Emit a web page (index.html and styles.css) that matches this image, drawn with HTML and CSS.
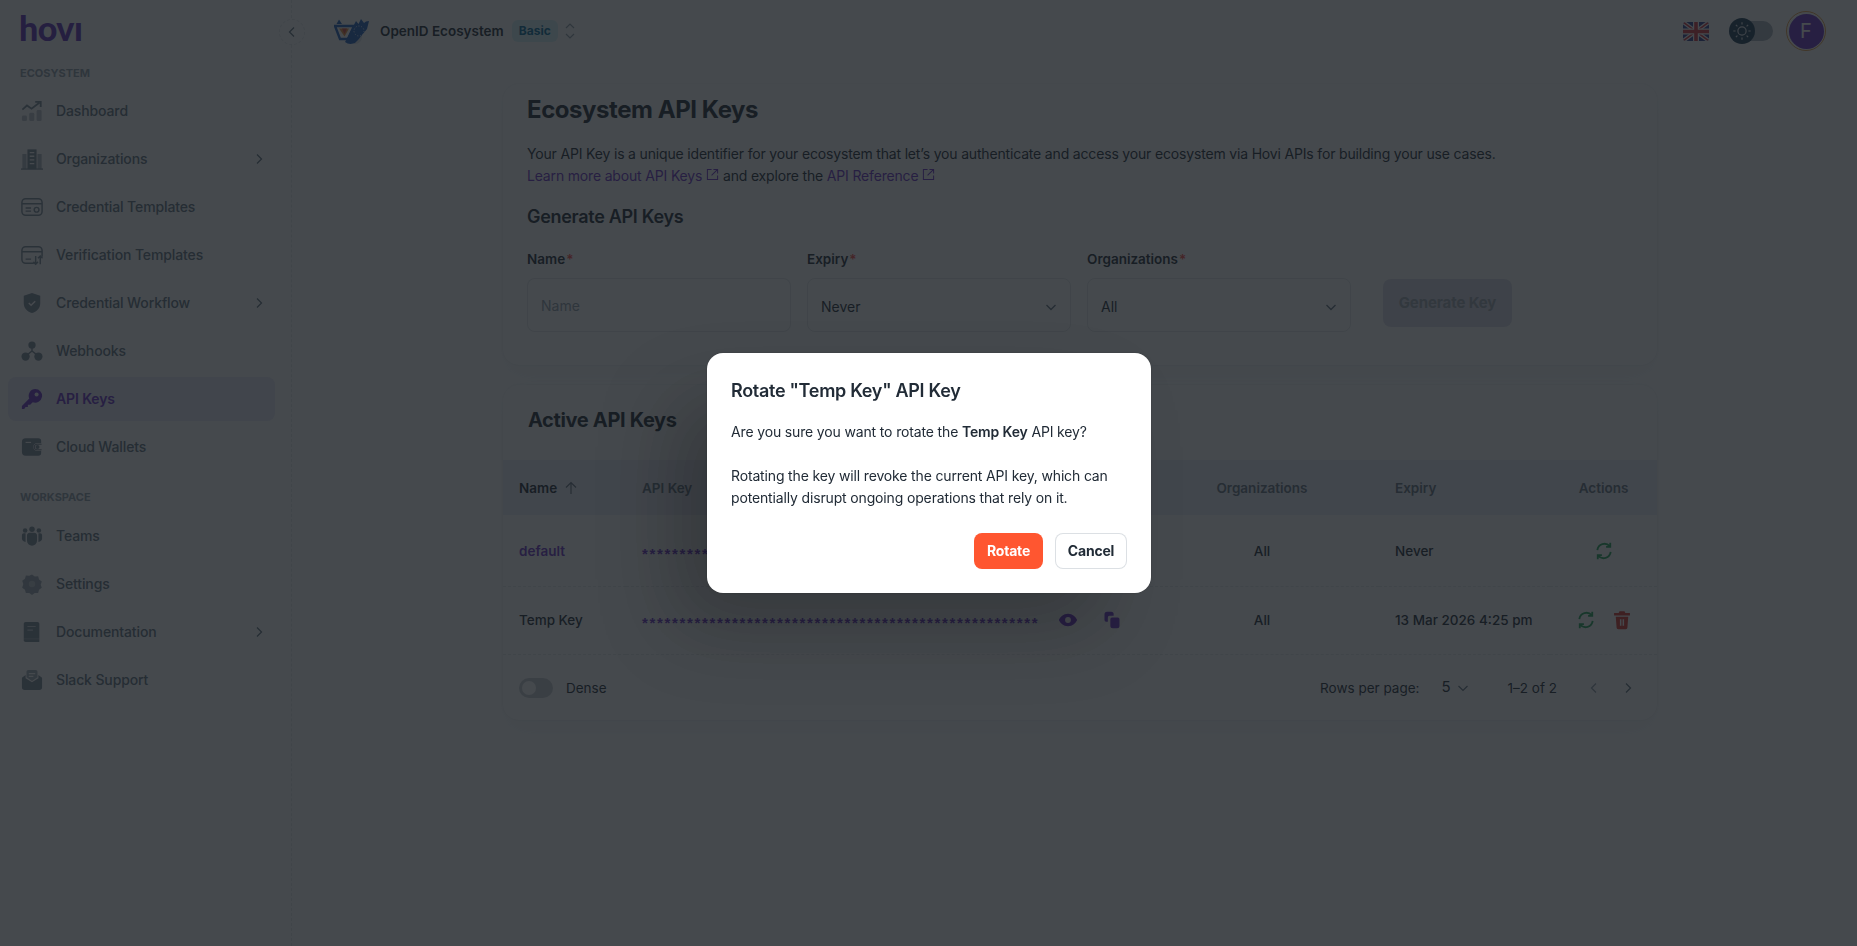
FILE: index.html
```html
<!DOCTYPE html>
<html lang="en">
<head>
<meta charset="utf-8">
<title>Ecosystem API Keys</title>
<link rel="stylesheet" href="styles.css">
</head>
<body>
<div class="app">
  <aside class="sidebar">
    <div class="logo">hovı</div>
    <div class="nav-section first">ECOSYSTEM</div>
    <nav class="nav">
      <a class="nav-item"><svg class="nav-icon" viewBox="0 0 24 24"><rect x="1" y="17" width="5.5" height="6" rx="1.5" opacity=".5"/><rect x="9" y="14" width="5.5" height="9" rx="1.5" opacity=".5"/><rect x="17" y="11" width="5.5" height="12" rx="1.5" opacity=".5"/><path d="M1.5 10.5l5-4.5 5 3.5L20 3M15.5 2H21.5V7.5" fill="none" stroke="currentColor" stroke-width="2"/></svg><span>Dashboard</span></a>
      <a class="nav-item"><svg class="nav-icon" viewBox="0 0 24 24"><path d="M7 1.5h10V23H7z" /><path d="M1.5 6.5H6V23H1.5zM18 6.5h4.5V23H18z" opacity=".6"/><path d="M9.5 5h5M9.5 9h5M9.5 13h5M9.5 17h5" stroke="#fff" stroke-width="1.4"/><path d="M0 23h24" stroke="currentColor" stroke-width="1.4"/></svg><span>Organizations</span><svg class="chev" viewBox="0 0 12 12"><path d="M4 1.5L8.5 6 4 10.5"/></svg></a>
      <a class="nav-item"><svg class="nav-icon" viewBox="0 0 24 24"><rect x="1" y="3" width="22" height="18" rx="4" fill="none" stroke="currentColor" stroke-width="1.6"/><path d="M1 8.5h22M5 13h6M5 16.5h6" stroke="currentColor" stroke-width="1.6"/><circle cx="17" cy="15" r="2.6" fill="none" stroke="currentColor" stroke-width="1.6"/></svg><span>Credential Templates</span></a>
      <a class="nav-item"><svg class="nav-icon" viewBox="0 0 24 24"><path d="M14 21H5a4 4 0 0 1-4-4V7a4 4 0 0 1 4-4h14a4 4 0 0 1 4 4v7" fill="none" stroke="currentColor" stroke-width="1.6"/><path d="M1 8.5h22M5 16.5h6M16 13v9M13.500 19.500l2.500 2.500 2.500-2.500M21 22v-9M18.500 15.500l2.500-2.500 2.500 2.500" fill="none" stroke="currentColor" stroke-width="1.6"/></svg><span>Verification Templates</span></a>
      <a class="nav-item"><svg class="nav-icon" viewBox="0 0 24 24"><path d="M12 1l9 3v8c0 6-4 9.500-9 11-5-1.500-9-5-9-11V4z"/><path d="M8.500 12l2.500 2.500 4.500-4.500" fill="none" stroke="#fff" stroke-width="1.6"/></svg><span>Credential Workflow</span><svg class="chev" viewBox="0 0 12 12"><path d="M4 1.500L8.500 6 4 10.500"/></svg></a>
      <a class="nav-item"><svg class="nav-icon" viewBox="0 0 24 24"><circle cx="12" cy="5.500" r="4"/><circle cx="5" cy="18" r="4.500"/><circle cx="19" cy="18" r="4.500"/><path d="M12 8v4M12 12l-5 4M12 12l5 4" fill="none" stroke="currentColor" stroke-width="1.600"/></svg><span>Webhooks</span></a>
      <a class="nav-item active"><svg class="nav-icon" viewBox="0 0 24 24"><path d="M15.500 1a7.500 7.500 0 1 1-2.700 14.500L10 18.300H7.500v2.500H5L3.500 23H1v-3.500l8-8A7.500 7.500 0 0 1 15.500 1z"/><circle cx="17" cy="7" r="2.200" fill="#edeef3"/></svg><span>API Keys</span></a>
      <a class="nav-item"><svg class="nav-icon" viewBox="0 0 24 24"><path d="M5 2.500h14a3 3 0 0 1 3 3V8h-4.500a4 4 0 0 0 0 8H22v2.500a3 3 0 0 1-3 3H5a4 4 0 0 1-4-4v-11a4 4 0 0 1 4-4z"/><path d="M5 7h6" stroke="#fff" stroke-width="1.200"/><circle cx="18" cy="12" r="2.200" /><path d="M22.500 9h-5a3 3 0 0 0 0 6h5" fill="none" stroke="currentColor" stroke-width="1.200"/></svg><span>Cloud Wallets</span></a>
    </nav>
    <div class="nav-section second">WORKSPACE</div>
    <nav class="nav">
      <a class="nav-item"><svg class="nav-icon" viewBox="0 0 24 24"><circle cx="12" cy="4.500" r="3"/><circle cx="4.500" cy="6" r="2.500"/><circle cx="19.500" cy="6" r="2.500"/><path d="M6.500 12a3 3 0 0 1 3-3.500h5a3 3 0 0 1 3 3.500v5a5.500 5.500 0 0 1-11 0z"/><path d="M1 11a2 2 0 0 1 2-2h2v9.500C2.500 18 1 16.500 1 15zM23 11a2 2 0 0 0-2-2h-2v9.500c2.500-.5 4-2 4-3.500z"/></svg><span>Teams</span></a>
      <a class="nav-item"><svg class="nav-icon" viewBox="0 0 24 24"><path d="M12 1.500l3 2.200 3.700-.2 1 3.500 3 2.300-1.200 3.500 1.200 3.400-3 2.200-1 3.500-3.700-.2-3 2.300-3-2.300-3.700.2-1-3.500-3-2.200L2.500 12 1.300 8.500l3-2.300 1-3.500 3.700.2z" opacity=".75"/><circle cx="12" cy="12" r="3.500" fill="#fff" opacity=".35"/></svg><span>Settings</span></a>
      <a class="nav-item"><svg class="nav-icon" viewBox="0 0 24 24"><path d="M5 1h13a2 2 0 0 1 2 2v20H5a2 2 0 0 1-2-2V3a2 2 0 0 1 2-2z"/><path d="M7 6h9M7 10h6" stroke="#fff" stroke-width="1.200" opacity=".6"/><path d="M3 19.500h17" stroke="#fff" stroke-width="1" opacity=".3"/></svg><span>Documentation</span><svg class="chev" viewBox="0 0 12 12"><path d="M4 1.500L8.500 6 4 10.500"/></svg></a>
      <a class="nav-item"><svg class="nav-icon" viewBox="0 0 24 24"><path d="M6 9V3a2 2 0 0 1 2-2h8a2 2 0 0 1 2 2v6l-6 4z" opacity=".7"/><path d="M8.500 5h7M8.500 8h5" stroke="#fff" stroke-width="1.200"/><path d="M1 9.500l4-3v3.500l7 4.500 7-4.500V6.500l4 3V20a3 3 0 0 1-3 3H4a3 3 0 0 1-3-3z"/></svg><span>Slack Support</span></a>
    </nav>
    <button class="collapse" type="button"><svg viewBox="0 0 12 12"><path d="M8 1.500L3.500 6 8 10.500"/></svg></button>
  </aside>

  <div class="content">
    <header class="topbar">
      <div class="eco">
        <svg class="eco-logo" viewBox="0 0 36 26"><circle cx="21" cy="19" r="7" fill="#dfe3ea"/><path d="M1 8h19l-6 13H6z" fill="#fff" stroke="#1f5fbf" stroke-width="2.400"/><path d="M5 10.500h10L10.500 18.500z" fill="#e8913f"/><path d="M8 10.500h5L10.500 16z" fill="#d8473c"/><path d="M2.500 6 5 1.500l3 4.500" fill="#1f5fbf"/><path d="M11 24 22 3l2.500 3L27 1l3 4 2-1.500L35 3l-2 8-9 11a9 9 0 0 1-13 2z" fill="#1f5fbf"/><circle cx="25" cy="13" r="5" fill="none" stroke="#e6ecf8" stroke-width="1" stroke-dasharray="1 1.800"/></svg>
        <span class="eco-name">OpenID Ecosystem</span>
        <span class="badge">Basic</span>
        <svg class="updown" viewBox="0 0 12 20"><path d="M2 7l4-4 4 4M2 13l4 4 4-4"/></svg>
      </div>
      <div class="top-actions">
        <svg class="flag" viewBox="0 0 26 19"><clipPath id="fc"><rect width="26" height="19" rx="3"/></clipPath><g clip-path="url(#fc)"><rect width="26" height="19" fill="#2d3f8f"/><path d="M0 0l26 19M26 0L0 19" stroke="#fff" stroke-width="4"/><path d="M0 0l26 19M26 0L0 19" stroke="#d8323c" stroke-width="1.500"/><path d="M13 0v19M0 9.500h26" stroke="#fff" stroke-width="6"/><path d="M13 0v19M0 9.500h26" stroke="#d8323c" stroke-width="3.600"/></g></svg>
        <div class="theme-toggle"><span class="knob"><svg viewBox="0 0 24 24"><circle cx="12" cy="12" r="4.500"/><path d="M12 2.500v2.500M12 19v2.500M2.500 12H5M19 12h2.500M5.300 5.300 7 7M17 17l1.700 1.700M5.300 18.700 7 17M17 7l1.700-1.700"/></svg></span></div>
        <div class="avatar-ring"><div class="avatar">F</div></div>
      </div>
    </header>

    <main class="main">
      <section class="card card-gen">
        <h1 class="title">Ecosystem API Keys</h1>
        <p class="lead">Your API Key is a unique identifier for your ecosystem that let’s you authenticate and access your ecosystem via Hovi APIs for building your use cases.<br>
          <a class="link">Learn more about API Keys<svg class="ext" viewBox="0 0 14 14"><path d="M6 1.500H1.500v11h11V8M8 1.500h4.500V6M12.500 1.500 6 8"/></svg></a> and explore the <a class="link">API Reference<svg class="ext" viewBox="0 0 14 14"><path d="M6 1.500H1.500v11h11V8M8 1.500h4.500V6M12.500 1.500 6 8"/></svg></a></p>
        <h2 class="subtitle">Generate API Keys</h2>
        <form class="gen-form">
          <div class="field">
            <label class="label">Name<span class="req">*</span></label>
            <input class="control input" placeholder="Name">
          </div>
          <div class="field">
            <label class="label">Expiry<span class="req">*</span></label>
            <div class="control select"><span>Never</span><svg class="sel-chev" viewBox="0 0 12 12"><path d="M1.500 4 6 8.500 10.500 4"/></svg></div>
          </div>
          <div class="field">
            <label class="label">Organizations<span class="req">*</span></label>
            <div class="control select"><span>All</span><svg class="sel-chev" viewBox="0 0 12 12"><path d="M1.500 4 6 8.500 10.500 4"/></svg></div>
          </div>
          <button class="gen-btn" type="button">Generate Key</button>
        </form>
      </section>

      <section class="card card-table">
        <h2 class="title-2">Active API Keys</h2>
        <table class="keys">
          <colgroup><col class="c-name"><col class="c-key"><col class="c-org"><col class="c-exp"><col class="c-act"></colgroup>
          <thead>
            <tr>
              <th class="th-name"><span class="name-head">Name<svg class="sort" viewBox="0 0 14 14"><path d="M7 13V1.500M2 6.500l5-5 5 5"/></svg></span></th>
              <th>API Key</th>
              <th class="center">Organizations</th>
              <th>Expiry</th>
              <th class="center">Actions</th>
            </tr>
          </thead>
          <tbody>
            <tr class="row-1">
              <td class="td-name name-link">default</td>
              <td><div class="key-cell"><span class="stars">*****************************************************</span>
                <svg class="ic-eye" viewBox="0 0 24 24"><path d="M12 4.500C6.500 4.500 2.500 8.500 1 12c1.500 3.500 5.500 7.500 11 7.500S21.500 15.500 23 12c-1.500-3.500-5.500-7.500-11-7.500zm0 11a3.500 3.500 0 1 1 0-7 3.500 3.500 0 0 1 0 7z"/></svg>
                <svg class="ic-copy" viewBox="0 0 24 24"><path d="M3 5a3 3 0 0 1 3-3h5a3 3 0 0 1 3 3v2H9a2 2 0 0 0-2 2v5H5a2 2 0 0 1-2-2zM10 11a2 2 0 0 1 2-2h7a2 2 0 0 1 2 2v8a3 3 0 0 1-3 3h-5a3 3 0 0 1-3-3z"/></svg></div></td>
              <td class="center">All</td>
              <td>Never</td>
              <td><div class="actions"><svg class="ic-rot" viewBox="0 0 24 24"><path d="M4 11a8.500 8.500 0 0 1 15-4.500M20 13a8.500 8.500 0 0 1-15 4.500M19.500 2v5h-5M4.500 22v-5h5"/></svg></div></td>
            </tr>
            <tr class="row-2">
              <td class="td-name">Temp Key</td>
              <td><div class="key-cell"><span class="stars">*****************************************************</span>
                <svg class="ic-eye" viewBox="0 0 24 24"><path d="M12 4.500C6.500 4.500 2.500 8.500 1 12c1.500 3.500 5.500 7.500 11 7.500S21.500 15.500 23 12c-1.500-3.500-5.500-7.500-11-7.500zm0 11a3.500 3.500 0 1 1 0-7 3.500 3.500 0 0 1 0 7z"/></svg>
                <svg class="ic-copy" viewBox="0 0 24 24"><path d="M3 5a3 3 0 0 1 3-3h5a3 3 0 0 1 3 3v2H9a2 2 0 0 0-2 2v5H5a2 2 0 0 1-2-2zM10 11a2 2 0 0 1 2-2h7a2 2 0 0 1 2 2v8a3 3 0 0 1-3 3h-5a3 3 0 0 1-3-3z"/></svg></div></td>
              <td class="center">All</td>
              <td>13 Mar 2026 4:25 pm</td>
              <td><div class="actions"><svg class="ic-rot" viewBox="0 0 24 24"><path d="M4 11a8.500 8.500 0 0 1 15-4.500M20 13a8.500 8.500 0 0 1-15 4.500M19.500 2v5h-5M4.500 22v-5h5"/></svg><svg class="ic-trash" viewBox="0 0 24 24"><path d="M9 1.500h6l1 2h5.500v3h-19v-3H8zM4.500 8h15l-1 13a2 2 0 0 1-2 2h-9a2 2 0 0 1-2-2zM9.500 11v8h1.800v-8zm3.200 0v8h1.800v-8z" fill-rule="evenodd"/></svg></div></td>
            </tr>
          </tbody>
        </table>
        <div class="table-foot">
          <div class="dense"><span class="switch"><span class="switch-knob"></span></span><span>Dense</span></div>
          <div class="pager">
            <span>Rows per page:</span>
            <span class="rows"><span class="rows-num">5</span><svg class="rows-chev" viewBox="0 0 12 12"><path d="M1.500 4 6 8.500 10.500 4"/></svg></span>
            <span class="range">1–2 of 2</span>
            <svg class="pg pg-prev" viewBox="0 0 12 12"><path d="M8 1.500 3.500 6 8 10.500"/></svg>
            <svg class="pg pg-next" viewBox="0 0 12 12"><path d="M4 1.500 8.500 6 4 10.500"/></svg>
          </div>
        </div>
      </section>
    </main>
  </div>
</div>

<div class="backdrop">
  <div class="dialog">
    <h2 class="dialog-title">Rotate "Temp Key" API Key</h2>
    <div class="dialog-body">
      <p>Are you sure you want to rotate the <strong>Temp Key</strong> API key?</p>
      <p>Rotating the key will revoke the current API key, which can potentially disrupt ongoing operations that rely on it.</p>
    </div>
    <div class="dialog-actions">
      <button class="btn btn-rotate" type="button">Rotate</button>
      <button class="btn btn-cancel" type="button">Cancel</button>
    </div>
  </div>
</div>
</body>
</html>
```
FILE: styles.css
```css
* { box-sizing: border-box; }
html, body { margin: 0; height: 100%; }
body {
  background: #fff;
  color: #212b36;
  font-family: Inter, "Liberation Sans", sans-serif;
  font-size: 14px;
  line-height: 22px;
  overflow: hidden;
}
h1, h2, p { margin: 0; }

.app { display: flex; height: 946px; }

/* sidebar */
.sidebar {
  position: relative;
  flex: 0 0 292px;
  padding: 0 16px 0 8px;
  border-right: 1px dashed rgba(145,158,171,.24);
}
.logo {
  height: 62px;
  padding: 6px 0 0 11px;
  font-family: Lato, sans-serif;
  font-weight: 900;
  font-size: 34px;
  line-height: 44px;
  letter-spacing: -0.5px;
  color: #5e2ebd;
}
.nav-section {
  height: 22px;
  margin: 15px 0 0 12px;
  font-size: 11px;
  font-weight: 700;
  line-height: 22px;
  color: #919eab;
}
.nav-section.first { margin-top: 0; }
.nav-section.second { margin-top: 17px; }
.nav { display: flex; flex-direction: column; gap: 4px; }
.nav-section + .nav { margin-top: 5px; }
.nav-section.second + .nav { margin-top: 6px; }
.nav-item {
  display: flex;
  align-items: center;
  height: 44px;
  padding: 0 12px 0 13px;
  border-radius: 8px;
  font-size: 14px;
  letter-spacing: -0.120px;
  color: #637381;
  font-weight: 500;
}
.nav-item > span { flex: 1; margin-left: 13px; }
.nav-icon { width: 22px; height: 22px; fill: currentColor; color: #7b8a98; flex: none; }
.chev { width: 12px; height: 12px; fill: none; stroke: currentColor; stroke-width: 1.300; flex: none; margin-right: -2px; }
.nav-item.active { background: #e8e8f8; color: #6a30c8; font-weight: 600; }
.nav-item.active .nav-icon { color: #6a30c8; }
.collapse {
  position: absolute;
  top: 19px;
  right: -14px;
  width: 26px;
  height: 26px;
  padding: 6px;
  border: 1px dashed rgba(145,158,171,.24);
  border-radius: 50%;
  background: #fff;
}
.collapse svg { display: block; width: 12px; height: 12px; fill: none; stroke: #637381; stroke-width: 1.300; }

/* top bar */
.content { flex: 1; min-width: 0; }
.topbar {
  display: flex;
  align-items: center;
  justify-content: space-between;
  height: 62px;
  padding: 0 31px 0 42px;
}
.eco { display: flex; align-items: center; }
.eco-logo { width: 36px; height: 26px; }
.eco-name { margin-left: 10px; font-weight: 600; font-size: 13.500px; }
.badge {
  margin-left: 8px;
  padding: 0 7px;
  height: 22px;
  border-radius: 6px;
  background: rgba(0,184,217,.16);
  color: #006c9c;
  font-size: 12px;
  font-weight: 700;
  line-height: 22px;
}
.updown { width: 12px; height: 20px; margin-left: 6px; fill: none; stroke: #919eab; stroke-width: 1.200; }
.top-actions { display: flex; align-items: center; }
.flag { width: 26px; height: 19px; }
.theme-toggle {
  position: relative;
  width: 40px;
  height: 20px;
  margin-left: 24px;
  border-radius: 10px;
  background: #a9b3bc;
}
.knob {
  position: absolute;
  left: -4px;
  top: -3px;
  display: flex;
  width: 26px;
  height: 26px;
  padding: 2px;
  border-radius: 50%;
  background: #1c3c55;
}
.knob svg { width: 22px; height: 22px; fill: none; stroke: #dfe3e8; stroke-width: 1.300; }
.avatar-ring {
  display: flex;
  align-items: center;
  justify-content: center;
  width: 40px;
  height: 40px;
  margin-left: 13px;
  border: 1px solid #e8a04a;
  border-radius: 50%;
}
.avatar {
  width: 35px;
  height: 35px;
  border-radius: 50%;
  background: #6a30c8;
  color: #fff;
  font-size: 20px;
  line-height: 35px;
  text-align: center;
}

/* main */
.main { padding: 22px 200px 0 211px; display: flex; flex-direction: column; gap: 20px; }
.card {
  border-radius: 16px;
  background: #fff;
  box-shadow: 0 0 2px rgba(145,158,171,.24), 0 12px 24px -4px rgba(145,158,171,.1);
}
.card-gen { height: 281px; padding: 8px 24px 0; }
.title { font-size: 24px; line-height: 36px; font-weight: 700; letter-spacing: -0.450px; }
.lead { margin-top: 15px; color: #212b36; letter-spacing: -0.172px; }
.link { color: #6a30c8; }
.ext { width: 13px; height: 13px; margin: 0 0 5px 4px; vertical-align: middle; fill: none; stroke: currentColor; stroke-width: 1.100; }
.subtitle { margin-top: 16px; font-size: 18px; line-height: 28px; font-weight: 600; letter-spacing: -0.300px; }
.gen-form { display: flex; gap: 16px; margin-top: 17px; align-items: flex-start; }
.field { flex: 0 0 264px; }
.label { display: block; height: 22px; margin-bottom: 8px; font-weight: 600; font-size: 13.500px; }
.req { color: #ff4842; margin-left: 1px; }
.control {
  display: flex;
  align-items: center;
  width: 100%;
  height: 54px;
  border: 1px solid rgba(145,158,171,.26);
  border-radius: 8px;
  font: inherit;
  color: inherit;
}
.input { padding: 0 13px; background: #fff; }
.input::placeholder { color: #919eab; }
.select { justify-content: space-between; padding: 3px 13px 0 13px; }
.sel-chev { width: 12px; height: 12px; fill: none; stroke: #637381; stroke-width: 1.400; }
.gen-btn {
  flex: none;
  width: 129px;
  height: 48px;
  margin: 31px 0 0 16px;
  border: 0;
  border-radius: 8px;
  background: #dcdce8;
  color: #a2a9b3;
  font: 700 15px/24px Inter, sans-serif;
  letter-spacing: -0.100px;
}

.card-table { height: 335px; padding-top: 20px; }
.title-2 { height: 30px; margin-left: 25px; font-size: 20px; line-height: 30px; font-weight: 700; letter-spacing: -0.350px; }
.keys { width: 100%; margin-top: 25px; border-collapse: collapse; table-layout: fixed; }
.c-name { width: 123px; }
.c-key { width: 519px; }
.c-org { width: 234px; }
.c-exp { width: 171px; }
.c-act { width: 107px; }
.keys th {
  height: 55px;
  padding: 0 16px;
  background: #eceef8;
  color: #637381;
  font-weight: 600;
  font-size: 13.500px;
  text-align: left;
}
.keys td { padding: 0 16px; font-size: 13.500px; font-weight: 500; border-bottom: 1px dashed rgba(145,158,171,.24); }
.keys .center { text-align: center; }
.keys th.th-name { color: #212b36; }
.keys .th-name, .keys .td-name { padding-left: 16px; padding-right: 0; }
.name-head { display: inline-flex; align-items: center; }
.sort { width: 14px; height: 14px; margin-left: 7px; fill: none; stroke: #637381; stroke-width: 1.200; }
.row-1 { height: 71px; }
.keys .row-1 td { padding-top: 2px; }
.row-2 { height: 68px; }
.td-name { font-weight: 600; }
.keys .name-link { color: #6a30c8; font-weight: 600; }
.key-cell { display: flex; align-items: center; height: 22px; }
.stars { flex: 0 0 398px; color: #6a30c8; font-family: "Liberation Sans", sans-serif; font-size: 15px; font-weight: 700; letter-spacing: 1.660px; white-space: nowrap; line-height: 28px; height: 22px; }
.ic-eye { width: 20px; height: 20px; margin-left: 18px; fill: #6a30c8; flex: none; }
.ic-copy { width: 20px; height: 20px; margin-left: 24px; fill: #6a30c8; flex: none; }
.actions { display: flex; justify-content: center; gap: 16px; margin: 0 -16px; }
.ic-rot { width: 20px; height: 20px; fill: none; stroke: #22a558; stroke-width: 2.200; }
.ic-trash { width: 20px; height: 20px; fill: #d9342b; }

.table-foot { display: flex; align-items: center; justify-content: space-between; height: 66px; padding: 0 0 0 16px; }
.dense { display: flex; align-items: center; gap: 13px; color: #212b36; font-size: 13.500px; }
.switch { display: block; width: 34px; height: 20px; padding: 3px; border-radius: 10px; background: #c9cdd2; }
.switch-knob { display: block; width: 14px; height: 14px; border-radius: 50%; background: #fff; }
.pager { display: flex; align-items: center; font-size: 13.500px; }
.rows { display: flex; align-items: center; margin-left: 22px; }
.rows-num { font-size: 15px; position: relative; bottom: 1px; }
.rows-chev { width: 12px; height: 12px; margin-left: 6px; fill: none; stroke: #637381; stroke-width: 1.200; }
.range { margin-left: 39px; }
.pg { width: 12px; height: 14px; fill: none; stroke: #919eab; stroke-width: 1.300; }
.pg-prev { margin-left: 31px; }
.pg-next { margin: 0 23px 0 22px; stroke: #637381; }

/* dialog */
.backdrop {
  position: fixed;
  inset: 0;
  background: rgba(22,28,33,.8);
}
.dialog {
  position: absolute;
  left: 707px;
  top: 353px;
  width: 444px;
  height: 240px;
  padding: 24px 24px 24px;
  border-radius: 16px;
  background: #fff;
  box-shadow: 0 0 2px rgba(0,0,0,.2), -40px 40px 80px -8px rgba(0,0,0,.24);
}
.dialog-title { font-size: 18px; line-height: 28px; font-weight: 600; letter-spacing: -0.300px; }
.dialog-body { margin-top: 16px; letter-spacing: -0.150px; }
.dialog-body strong { font-weight: 600; }
.dialog-body p + p { margin-top: 22px; }
.dialog-actions { display: flex; justify-content: flex-end; gap: 12px; margin-top: 24px; }
.btn {
  height: 36px;
  border-radius: 8px;
  font: 700 14px/24px Inter, sans-serif;
  letter-spacing: -0.200px;
}
.btn-rotate { width: 69px; border: 0; background: #ff5630; color: #fff; }
.btn-cancel { width: 72px; border: 1px solid rgba(145,158,171,.32); background: #fff; color: #212b36; }
```
